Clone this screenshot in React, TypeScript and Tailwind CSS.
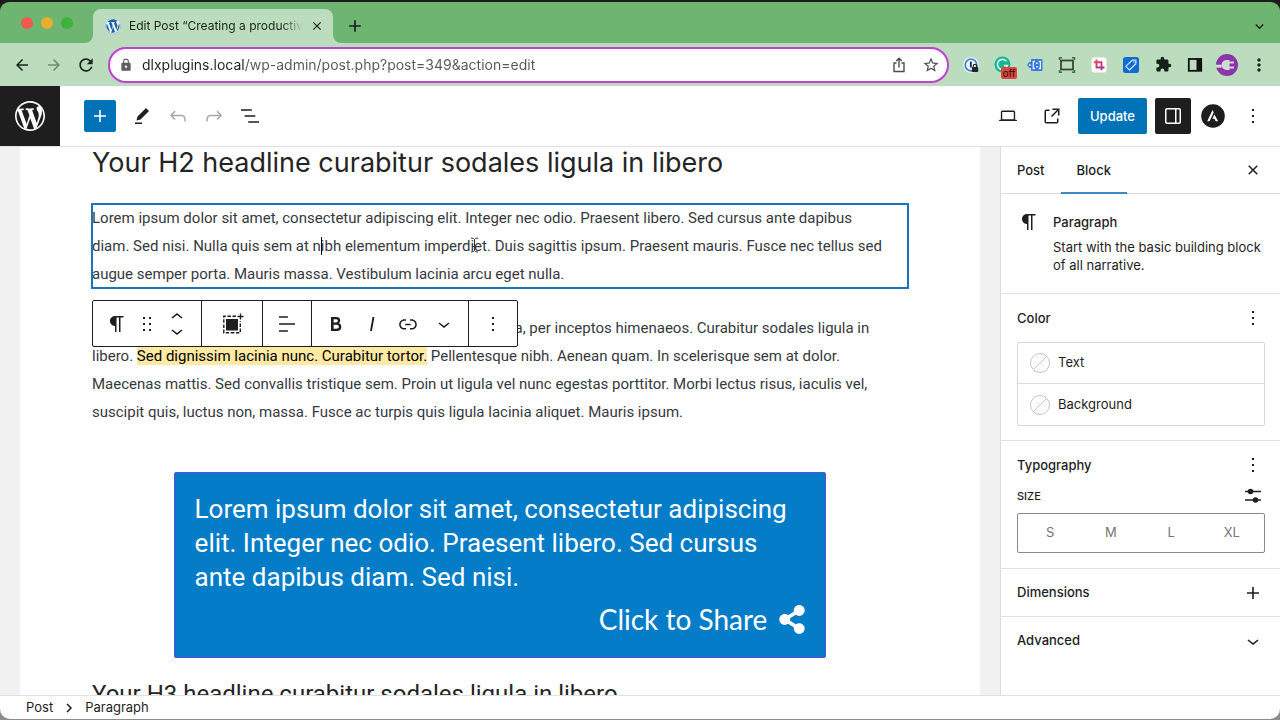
import type { ReactNode } from "react";
import { FaWordpress, FaShareAlt } from "react-icons/fa";
import { MdExtension, MdLock, MdStarBorder, MdRefresh, MdArrowBack, MdArrowForward, MdAdd, MdClose, MdKeyboardArrowDown, MdMoreVert } from "react-icons/md";

const paths = {
  plus: "M18 11.2h-5.2V6h-1.6v5.2H6v1.6h5.2V18h1.6v-5.2H18z",
  edit: "m19 7-3-3-8.5 8.5-1 4 4-1L19 7Zm-7 11.5H5V20h7v-1.5Z",
  undo: "M18.3 11.7c-.6-.6-1.4-.9-2.3-.9H6.7l2.9-3.3-1.1-1-4.5 5L8.5 16l1-1-2.7-2.7H16c.5 0 .9.2 1.3.5 1 1 1 3.4 1 4.5v.3h1.5v-.2c0-1.5 0-4.3-1.5-5.7z",
  redo: "M15.6 6.5l-1.1 1 2.9 3.3H8c-.9 0-1.7.3-2.3.9-1.4 1.5-1.4 4.2-1.4 5.6v.2h1.5v-.3c0-1.1 0-3.5 1-4.5.3-.3.7-.5 1.3-.5h9.2L14.5 15l1.1 1.1 4.6-4.6-4.6-5z",
  list: "M13.8 5.2H3v1.5h10.8V5.2zm-3.6 12v1.5H21v-1.5H10.2zm7.2-6H6.6v1.5h10.8v-1.5z",
  desktop: "M20.5 16h-.7V8c0-1.1-.9-2-2-2H6.2c-1.1 0-2 .9-2 2v8h-.7c-.8 0-1.5.7-1.5 1.5h20c0-.8-.7-1.5-1.5-1.5zM5.7 8c0-.3.2-.5.5-.5h11.6c.3 0 .5.2.5.5v7.6H5.7V8z",
  external: "M19.5 4.5h-7V6h4.44l-5.97 5.97 1.06 1.06L18 7.06v4.44h1.5v-7Zm-13 1a2 2 0 0 0-2 2v10a2 2 0 0 0 2 2h10a2 2 0 0 0 2-2v-3H17v3a.5.5 0 0 1-.5.5h-10a.5.5 0 0 1-.5-.5v-10a.5.5 0 0 1 .5-.5h3V5.5h-3Z",
  drawer: "M18 4H6c-1.1 0-2 .9-2 2v12c0 1.1.9 2 2 2h12c1.1 0 2-.9 2-2V6c0-1.1-.9-2-2-2zm-4 14.5H6c-.3 0-.5-.2-.5-.5V6c0-.3.2-.5.5-.5h8v13zm4.5-.5c0 .3-.2.5-.5.5h-2.5v-13H18c.3 0 .5.2.5.5v12z",
  more: "M13 19h-2v-2h2v2zm0-6h-2v-2h2v2zm0-6h-2V5h2v2z",
  paragraph: "m9.99609 14v-.2251l.00391.0001v6.225h1.5v-14.5h2.5v14.5h1.5v-14.5h3v-1.5h-8.50391c-2.76142 0-5 2.23858-5 5 0 2.7614 2.23858 5 5 5z",
  drag: "M8 7h2V5H8v2zm0 6h2v-2H8v2zm0 6h2v-2H8v2zm6-14v2h2V5h-2zm0 8h2v-2h-2v2zm0 6h2v-2h-2v2z",
  up: "M6.5 12.4L12 8l5.5 4.4-.9 1.2L12 10l-4.5 3.6-1-1.2z",
  down: "M17.5 11.6L12 16l-5.5-4.4.9-1.2L12 14l4.5-3.6 1 1.2z",
  align: "M4 19.8h8.9v-1.5H4v1.5zm8.9-15.6H4v1.5h8.9V4.2zm-8.9 7v1.5h16v-1.5H4z",
  bold: "M14.7 11.3c1-.6 1.5-1.6 1.5-3 0-2.3-1.3-3.4-4-3.4H7v14h5.8c1.4 0 2.5-.3 3.3-1 .8-.7 1.2-1.7 1.2-2.9.1-1.9-.8-3.1-2.6-3.7zm-5.1-4h2.3c.6 0 1.1.1 1.4.4.3.3.5.7.5 1.2s-.2 1-.5 1.2c-.3.3-.8.4-1.4.4H9.6V7.3zm4.6 9c-.4.3-1 .4-1.7.4H9.6v-3.9h2.9c.7 0 1.3.2 1.7.5.4.3.6.8.6 1.5s-.2 1.2-.6 1.5z",
  italic: "M12.5 5L10 19h1.9l2.5-14z",
  link: "M15.6 7.2H14v1.5h1.6c2 0 3.7 1.7 3.7 3.7s-1.7 3.7-3.7 3.7H14v1.5h1.6c2.8 0 5.2-2.3 5.2-5.2 0-2.9-2.3-5.2-5.2-5.2zM4.7 12.4c0-2 1.7-3.7 3.7-3.7H10V7.2H8.4c-2.9 0-5.2 2.3-5.2 5.2 0 2.9 2.3 5.2 5.2 5.2H10v-1.5H8.4c-2 0-3.7-1.7-3.7-3.7zm4.6.9h5.3v-1.5H9.3v1.5z",
  close: "M12 13.06l3.712 3.713 1.061-1.06L13.061 12l3.712-3.712-1.06-1.06L12 10.938 8.288 7.227l-1.061 1.06L10.939 12l-3.712 3.712 1.06 1.061L12 13.061z",
};

function Icon({ name, className = "size-6" }: { name: keyof typeof paths; className?: string }) {
  return (
    <svg viewBox="0 0 24 24" className={`shrink-0 fill-current ${className}`} aria-hidden="true">
      <path d={paths[name]} />
    </svg>
  );
}

function IconButton({ label, className = "size-9", children }: { label: string; className?: string; children: ReactNode }) {
  return (
    <button type="button" aria-label={label} className={`flex shrink-0 items-center justify-center ${className}`}>
      {children}
    </button>
  );
}

function TabStrip() {
  return (
    <div className="flex h-[41px] items-end rounded-t-[9px] bg-[#6fb572] pl-[21px]">
      <div className="mb-3.5 flex gap-2">
        <button type="button" aria-label="Close window" className="size-3 rounded-full bg-[#f05b50]" />
        <button type="button" aria-label="Minimize window" className="size-3 rounded-full bg-[#e9ad30]" />
        <button type="button" aria-label="Zoom window" className="size-3 rounded-full bg-[#3eb33c]" />
      </div>
      <svg viewBox="0 0 8 8" className="ml-3 size-2 fill-[#bbddbd]" aria-hidden="true">
        <path d="M8 0A8 8 0 0 1 0 8h8z" />
      </svg>
      <div className="flex h-[34px] w-60 items-center rounded-t-lg bg-[#bbddbd] pr-2 pl-3">
        <span className="flex size-4 shrink-0 items-center justify-center rounded-full bg-white">
          <FaWordpress className="size-4 text-[#1a64a0]" />
        </span>
        <span className="ml-2 w-[174px] overflow-hidden text-[12px] whitespace-nowrap text-[#1b231b] [mask-image:linear-gradient(to_right,black_88%,transparent)]">
          Edit Post “Creating a productive workspace”
        </span>
        <IconButton label="Close tab" className="ml-1.5 size-4">
          <MdClose className="size-3.5" />
        </IconButton>
      </div>
      <svg viewBox="0 0 8 8" className="size-2 fill-[#bbddbd]" aria-hidden="true">
        <path d="M0 0a8 8 0 0 0 8 8H0z" />
      </svg>
      <IconButton label="New tab" className="mb-[7px] ml-1 size-5">
        <MdAdd className="size-5" />
      </IconButton>
      <IconButton label="Search tabs" className="mr-3 mb-2 ml-auto size-[18px]">
        <MdKeyboardArrowDown className="size-[17px]" />
      </IconButton>
    </div>
  );
}

function Extensions() {
  return (
    <div className="flex items-center gap-2 pl-2.5">
      <IconButton label="Password manager" className="size-6">
        <svg viewBox="0 0 24 24" className="size-6" aria-hidden="true">
          <circle cx="12" cy="12" r="7.8" fill="#f4f8fd" />
          <circle cx="12" cy="12" r="5.8" fill="#fff" stroke="#3d84d6" strokeWidth="1.8" />
          <path d="M11.8 8.5v6" stroke="#27364a" strokeWidth="2" />
          <rect x="12.8" y="14" width="6.4" height="5" rx=".8" fill="#22262c" />
          <path d="M14.2 14.4v-1.2a1.8 1.8 0 0 1 3.600 0v1.2" fill="none" stroke="#22262c" strokeWidth="1.2" />
        </svg>
      </IconButton>
      <IconButton label="Grammar checker, off" className="relative size-6">
        <svg viewBox="0 0 24 24" className="size-6" aria-hidden="true">
          <circle cx="11.5" cy="11.5" r="8" fill="#15b493" />
          <path d="M15.300 8.200a5 5 0 1 0 1 4.500h-3.300" fill="none" stroke="#d5f2e8" strokeWidth="1.7" />
        </svg>
        <span className="absolute top-3.5 left-2.5 h-3 w-4 rounded-[2px] bg-[#d9463c] text-center text-[10px] leading-3 text-[#2a0f0d]">off</span>
      </IconButton>
      <IconButton label="Code snippets" className="size-6">
        <svg viewBox="0 0 24 24" className="size-6" aria-hidden="true">
          <path d="M9 6h9.500a1 1 0 0 1 1 1v10a1 1 0 0 1-1 1H9a1 1 0 0 1-1-1v-2H6.500L4 12l2.500-3H8V7a1 1 0 0 1 1-1z" fill="#3b78e0" />
          <path d="M12 8.500h-1.700v7H12M15.700 8.500h1.700v7h-1.700" fill="none" stroke="#e7f0ff" strokeWidth="1.300" />
          <path d="M13.900 9.500v1.600M13.900 13v1.600" stroke="#fff" strokeWidth="1.500" />
          <circle cx="6.800" cy="12" r="1" fill="#d8e6ff" />
        </svg>
      </IconButton>
      <IconButton label="Window resizer" className="size-6">
        <svg viewBox="0 0 24 24" className="size-6" fill="none" aria-hidden="true">
          <rect x="6" y="7.500" width="12" height="9" stroke="#3a443b" strokeWidth="1.800" />
          <path d="M4.500 7V4.700H7M17 4.700h2.500V7M19.500 17v2.300H17M7 19.300H4.500V17" stroke="#2f7d32" strokeWidth="1.500" />
        </svg>
      </IconButton>
      <IconButton label="Screenshot" className="size-6">
        <svg viewBox="0 0 24 24" className="size-6" aria-hidden="true">
          <defs>
            <linearGradient id="crop-stroke" x1="0" y1="0" x2="1" y2="1">
              <stop offset="0" stopColor="#ef4a3e" />
              <stop offset="1" stopColor="#9b2fb0" />
            </linearGradient>
          </defs>
          <rect x="4.500" y="4.500" width="15" height="15" rx="3" fill="#fff" />
          <path d="M9.500 6.500v8h8M7 9.200h7.500v8" fill="none" stroke="url(#crop-stroke)" strokeWidth="1.900" />
        </svg>
      </IconButton>
      <IconButton label="Tag assistant" className="size-6">
        <svg viewBox="0 0 24 24" className="size-6" aria-hidden="true">
          <rect x="4" y="4" width="16" height="16" rx="2.500" fill="#0f6bd2" />
          <path d="M13.200 7.200l3.800-.2-.2 3.800-6.300 6.200-3.700-3.600z" fill="none" stroke="#cfe3fb" strokeWidth="1.200" strokeLinejoin="round" />
          <circle cx="15" cy="9" r=".8" fill="#cfe3fb" />
        </svg>
      </IconButton>
      <IconButton label="Extensions" className="size-6">
        <MdExtension className="size-[17px] text-[#14201a]" />
      </IconButton>
      <IconButton label="Side panel" className="size-6">
        <svg viewBox="0 0 24 24" className="size-6" aria-hidden="true">
          <rect x="5.800" y="6" width="12.400" height="11.800" fill="#bbddbd" stroke="#111" strokeWidth="1.800" />
          <path d="M13.500 5.500h5v12.500h-5z" fill="#111" />
        </svg>
      </IconButton>
      <IconButton label="Profile" className="size-6">
        <svg viewBox="0 0 24 24" className="size-6" aria-hidden="true">
          <circle cx="12" cy="12" r="11" fill="#8a35a8" />
          <path d="M1 13.200h5.500" stroke="#cfd9d6" strokeWidth="3" />
          <path d="M14.500 7v10h-3a5 5 0 0 1-5-5 5 5 0 0 1 5-5z" fill="#cfd9d6" />
          <path d="M14 9.500h5M14 14.500h5" stroke="#cfd9d6" strokeWidth="2.200" />
        </svg>
      </IconButton>
      <IconButton label="Browser menu" className="size-6">
        <MdMoreVert className="size-5" />
      </IconButton>
    </div>
  );
}

function AddressBar() {
  return (
    <div className="flex h-[43px] items-center bg-[#bbddbd] pr-[9px] pl-2.5 text-[#1b231b]">
      <IconButton label="Back" className="size-6">
        <MdArrowBack className="size-[18px]" />
      </IconButton>
      <IconButton label="Forward" className="ml-2 size-6 text-[#6f8a71]">
        <MdArrowForward className="size-[18px]" />
      </IconButton>
      <IconButton label="Reload" className="ml-2 size-6">
        <MdRefresh className="size-5" />
      </IconButton>
      <div className="ml-2.5 flex h-9 flex-1 items-center rounded-full border-2 border-[#c13fd2] bg-white pr-1 pl-[9px]">
        <MdLock className="size-3.5 shrink-0 text-[#5b5f63]" />
        <input
          type="text"
          aria-label="Address"
          defaultValue="dlxplugins.local/wp-admin/post.php?post=349&action=edit"
          className="ml-[9px] flex-1 bg-[linear-gradient(to_right,#202124_102px,#55595d_102px)] bg-clip-text text-[14px] text-transparent outline-none"
        />
        <IconButton label="Share" className="size-6 text-[#4a4d50]">
          <svg viewBox="0 0 24 24" className="size-6 fill-none stroke-current" strokeWidth="1.4" aria-hidden="true">
            <path d="M9.500 10H7v8.500h10V10h-2.500M12 14.500V5.500M9.200 8L12 5.200 14.800 8" />
          </svg>
        </IconButton>
        <IconButton label="Bookmark" className="ml-2 size-6 text-[#4a4d50]">
          <MdStarBorder className="size-[18px]" />
        </IconButton>
      </div>
      <Extensions />
    </div>
  );
}

function EditorHeader() {
  return (
    <header className="flex h-[61px] items-stretch border-b border-[#e0e0e0] bg-white">
      <a href="#posts" aria-label="View posts" className="flex w-[60px] items-center justify-center bg-[#1e1e1e] text-white">
        <svg viewBox="-2 -2 24 24" className="size-9 fill-current" aria-hidden="true">
          <path d="M20 10c0-5.51-4.49-10-10-10C4.48 0 0 4.49 0 10c0 5.52 4.48 10 10 10 5.51 0 10-4.48 10-10zM7.78 15.37L4.37 6.22c.55-.02 1.17-.08 1.17-.08.5-.06.44-1.13-.06-1.11 0 0-1.45.11-2.37.11-.18 0-.37 0-.58-.01C4.12 2.69 6.87 1.11 10 1.11c2.33 0 4.45.87 6.05 2.34-.68-.11-1.65.39-1.65 1.58 0 .74.45 1.36.9 2.1.35.61.55 1.36.55 2.46 0 1.49-1.4 5-1.4 5l-3.03-8.37c.54-.02.82-.17.82-.17.5-.05.44-1.25-.06-1.22 0 0-1.44.12-2.38.12-.87 0-2.33-.12-2.33-.12-.5-.03-.56 1.2-.06 1.22l.92.08 1.26 3.41zM17.41 10c.24-.64.74-1.87.43-4.25.7 1.29 1.05 2.71 1.05 4.25 0 3.29-1.73 6.24-4.4 7.78.97-2.59 1.94-5.2 2.92-7.78zM6.1 18.09C3.12 16.65 1.11 13.53 1.11 10c0-1.3.23-2.48.72-3.59C3.25 10.3 4.67 14.2 6.1 18.09zm4.03-6.63l2.58 6.98c-.86.29-1.76.45-2.71.45-.79 0-1.57-.11-2.29-.33.81-2.38 1.62-4.74 2.42-7.1z" />
        </svg>
      </a>
      <div className="flex items-center pl-6">
        <IconButton label="Toggle block inserter" className="mr-2 size-8 rounded-xs bg-[#0073b8] text-white">
          <Icon name="plus" />
        </IconButton>
        <IconButton label="Tools">
          <Icon name="edit" />
        </IconButton>
        <IconButton label="Undo" className="size-9 text-[#a8a8a8]">
          <Icon name="undo" />
        </IconButton>
        <IconButton label="Redo" className="size-9 text-[#a8a8a8]">
          <Icon name="redo" />
        </IconButton>
        <IconButton label="Document overview">
          <Icon name="list" />
        </IconButton>
      </div>
      <div className="ml-auto flex items-center gap-2 pr-[9px]">
        <IconButton label="Preview">
          <Icon name="desktop" className="size-[22px]" />
        </IconButton>
        <IconButton label="View post">
          <Icon name="external" />
        </IconButton>
        <button type="button" className="h-9 rounded-xs bg-[#0073b8] px-3 pt-px text-[13px] font-medium text-white">
          Update
        </button>
        <IconButton label="Settings" className="size-9 rounded-xs bg-[#1e1e1e] text-white">
          <Icon name="drawer" />
        </IconButton>
        <IconButton label="Astra settings" className="size-7">
          <svg viewBox="0 0 24 24" className="size-6" aria-hidden="true">
            <circle cx="12" cy="12" r="11.800" fill="#1e1e1e" />
            <path d="M11.500 6L6.200 17.300h2.300l4.200-8.700zM13.400 10.400l-2.100 4.300h2.200l1.200 2.600h2.500z" fill="#fff" />
          </svg>
        </IconButton>
        <IconButton label="Options">
          <Icon name="more" />
        </IconButton>
      </div>
    </header>
  );
}

function BlockToolbar() {
  return (
    <div role="toolbar" aria-label="Block tools" className="absolute top-24 left-0 flex h-[47px] divide-x divide-[#1e1e1e] rounded-xs border border-[#1e1e1e] bg-white text-[#1e1e1e]">
      <div className="flex w-[109px] items-center pl-3">
        <IconButton label="Paragraph" className="size-6"><Icon name="paragraph" /></IconButton>
        <IconButton label="Drag" className="ml-1.5 size-6"><Icon name="drag" /></IconButton>
        <div className="ml-1.5 flex flex-col">
          <IconButton label="Move up" className="h-3.5 w-6"><Icon name="up" /></IconButton>
          <IconButton label="Move down" className="h-3.5 w-6"><Icon name="down" /></IconButton>
        </div>
      </div>
      <IconButton label="Add to container" className="h-full w-[61px]">
        <svg viewBox="0 0 24 24" className="size-6" aria-hidden="true">
          <path d="M6 7h12v11.500H6z" fill="#1e1e1e" />
          <path d="M16 4.200H3.800v16.500h16.500V9" fill="none" stroke="#1e1e1e" strokeWidth="1.400" strokeDasharray="3.500 1.600" />
          <path d="M20.500 1.500v6M17.500 4.500h6" stroke="#1e1e1e" strokeWidth="1.300" />
        </svg>
      </IconButton>
      <IconButton label="Align text" className="h-full w-[49px]"><Icon name="align" /></IconButton>
      <div className="flex w-[157px] items-center pl-1.5">
        <IconButton label="Bold"><Icon name="bold" /></IconButton>
        <IconButton label="Italic"><Icon name="italic" /></IconButton>
        <IconButton label="Link"><Icon name="link" /></IconButton>
        <IconButton label="More"><Icon name="down" /></IconButton>
      </div>
      <IconButton label="Block options" className="h-full w-12"><Icon name="more" /></IconButton>
    </div>
  );
}

function Canvas() {
  return (
    <main className="min-w-0 flex-1 overflow-hidden bg-[#f1f1f1] px-5">
      <div className="h-full bg-white px-[72px] font-[Roboto,sans-serif] text-[15px] leading-7 whitespace-nowrap text-[#36393e]">
        <h2 className="font-[Inter,sans-serif] text-[27px] leading-8 text-[#242424]">Your H2 headline curabitur sodales ligula in libero</h2>
        <div className="relative mt-[25px]">
          <p className="outline-2 -outline-offset-1 outline-[#1a75b5]">
            Lorem ipsum dolor sit amet, consectetur adipiscing elit. Integer nec odio. Praesent libero. Sed cursus ante dapibus
            <br />
            diam. Sed nisi. Nulla quis sem at n
            <span className="relative">
              <span className="absolute top-0 left-0 h-[18px] w-px bg-black" />
            </span>
            ibh elementum imperdiet. Duis sagittis ipsum. Praesent mauris. Fusce nec tellus sed
            <br />
            augue semper porta. Mauris massa. Vestibulum lacinia arcu eget nulla.
          </p>
          <svg viewBox="0 0 9 16" className="absolute top-[33px] left-[378px] h-4 w-[9px] fill-none stroke-[#333]" aria-hidden="true">
            <path d="M1 1q3 0 3.500 1.500Q5 1 8 1M1 15q3 0 3.500-1.500Q5 15 8 15M4.500 2.500v11M2.500 9.500h4" />
          </svg>
          <BlockToolbar />
        </div>
        <p className="mt-[26px]">
          Class aptent taciti sociosqu ad litora torquent per conubia nostra, per inceptos himenaeos. Curabitur sodales ligula in
          <br />
          libero. <mark className="bg-[#ffe9a3] text-black">Sed dignissim lacinia nunc. Curabitur tortor.</mark> Pellentesque nibh. Aenean quam. In scelerisque sem at dolor.
          <br />
          Maecenas mattis. Sed convallis tristique sem. Proin ut ligula vel nunc egestas porttitor. Morbi lectus risus, iaculis vel,
          <br />
          suscipit quis, luctus non, massa. Fusce ac turpis quis ligula lacinia aliquet. Mauris ipsum.
        </p>
        <section className="mx-auto mt-[46px] w-4/5 rounded-xs border border-[#5a4fe0] bg-[#047cc8] px-5 pt-[19px] pb-5 text-white">
          <p className="text-[26px] leading-[34px]">
            Lorem ipsum dolor sit amet, consectetur adipiscing
            <br />
            elit. Integer nec odio. Praesent libero. Sed cursus
            <br />
            ante dapibus diam. Sed nisi.
          </p>
          <div className="mt-[7px] flex justify-end">
            <a href="#share" className="flex items-center gap-3 font-[Lato,sans-serif] text-[28px] leading-9">
              Click to Share
              <FaShareAlt className="h-[29px] w-[26px]" />
            </a>
          </div>
        </section>
        <h3 className="mt-5 text-[24px] leading-8 text-[#242424]">Your H3 headline curabitur sodales ligula in libero</h3>
      </div>
    </main>
  );
}

function ColorRow({ label }: { label: string }) {
  return (
    <button type="button" className="flex h-[41px] w-full items-center gap-2 px-3">
      <svg viewBox="0 0 20 20" className="size-5 fill-none stroke-[#c4c4c4]" aria-hidden="true">
        <circle cx="10" cy="10" r="9.500" />
        <path d="M3.500 16.500l13-13" />
      </svg>
      {label}
    </button>
  );
}

function Sidebar() {
  return (
    <aside className="w-[280px] shrink-0 border-l border-[#dcdcdc] bg-white text-[13px] text-[#1e1e1e]">
      <div className="flex h-[47px] items-center border-b border-[#ddd]">
        <button type="button" className="h-[47px] px-4 pt-px font-medium">Post</button>
        <button type="button" className="h-[47px] border-b-2 border-[#3b88c0] px-4 pt-[3px] font-medium">Block</button>
        <IconButton label="Close settings" className="mr-[15px] ml-auto size-6"><Icon name="close" /></IconButton>
      </div>
      <div className="flex gap-3 border-b border-[#e0e0e0] px-4 pt-4 pb-[19px]">
        <Icon name="paragraph" />
        <div>
          <h2 className="leading-6 font-medium">Paragraph</h2>
          <p className="mt-1 leading-[18px] whitespace-nowrap">
            Start with the basic building block
            <br />
            of all narrative.
          </p>
        </div>
      </div>
      <section className="border-b border-[#e0e0e0] pr-[15px] pb-3.5 pl-4">
        <div className="flex h-12 items-center justify-between">
          <h2 className="pt-px font-medium">Color</h2>
          <IconButton label="Color options" className="size-6"><Icon name="more" /></IconButton>
        </div>
        <div className="divide-y divide-[#ddd] rounded-xs border border-[#d8d8d8]">
          <ColorRow label="Text" />
          <ColorRow label="Background" />
        </div>
      </section>
      <section className="border-b border-[#e0e0e0] pr-[15px] pb-[15px] pl-4">
        <div className="flex h-12 items-center justify-between">
          <h2 className="pt-px font-medium">Typography</h2>
          <IconButton label="Typography options" className="size-6"><Icon name="more" /></IconButton>
        </div>
        <div className="flex h-6 items-start justify-between">
          <h3 className="text-[11px] leading-[14px] font-medium">SIZE</h3>
          <IconButton label="Set custom size" className="h-3.5 w-6">
            <svg viewBox="0 0 24 24" className="size-6 shrink-0 fill-current stroke-current" strokeWidth="1.500" aria-hidden="true">
              <path d="M4 7.500h16M4 16h16" />
              <circle cx="9.500" cy="7.500" r="2" />
              <circle cx="14.500" cy="16" r="2" />
            </svg>
          </IconButton>
        </div>
        <div role="group" aria-label="Font size" className="grid h-10 grid-cols-4 rounded-xs border border-[#8a8a8a] px-0.5 text-[#757575]">
          <button type="button">S</button>
          <button type="button">M</button>
          <button type="button">L</button>
          <button type="button">XL</button>
        </div>
      </section>
      <button type="button" className="flex h-12 w-full items-center justify-between border-b border-[#e0e0e0] pr-[15px] pl-4 font-medium">
        Dimensions
        <Icon name="plus" />
      </button>
      <button type="button" className="flex h-12 w-full items-center justify-between pr-[15px] pl-4 font-medium">
        Advanced
        <Icon name="down" />
      </button>
    </aside>
  );
}

export default function App() {
  return (
    <div className="flex h-screen flex-col overflow-hidden bg-[#8c8c8c] pb-px font-[Inter,sans-serif] text-[#1e1e1e]">
      <div className="bg-[#1c1c1e] pt-0.5">
        <TabStrip />
      </div>
      <AddressBar />
      <EditorHeader />
      <div className="flex min-h-0 flex-1">
        <Canvas />
        <Sidebar />
      </div>
      <footer className="rounded-b-[10px] border-t border-[#e0e0e0] bg-white">
        <nav aria-label="Block breadcrumb" className="flex h-[23px] items-center pt-px pl-[26px] text-[13px]">
          <a href="#post">Post</a>
          <svg viewBox="0 0 8 10" className="mx-3 h-2.5 w-2 fill-none stroke-current" strokeWidth="1.500" aria-hidden="true">
            <path d="M2 1l4 4-4 4" />
          </svg>
          <a href="#paragraph">Paragraph</a>
        </nav>
      </footer>
    </div>
  );
}
